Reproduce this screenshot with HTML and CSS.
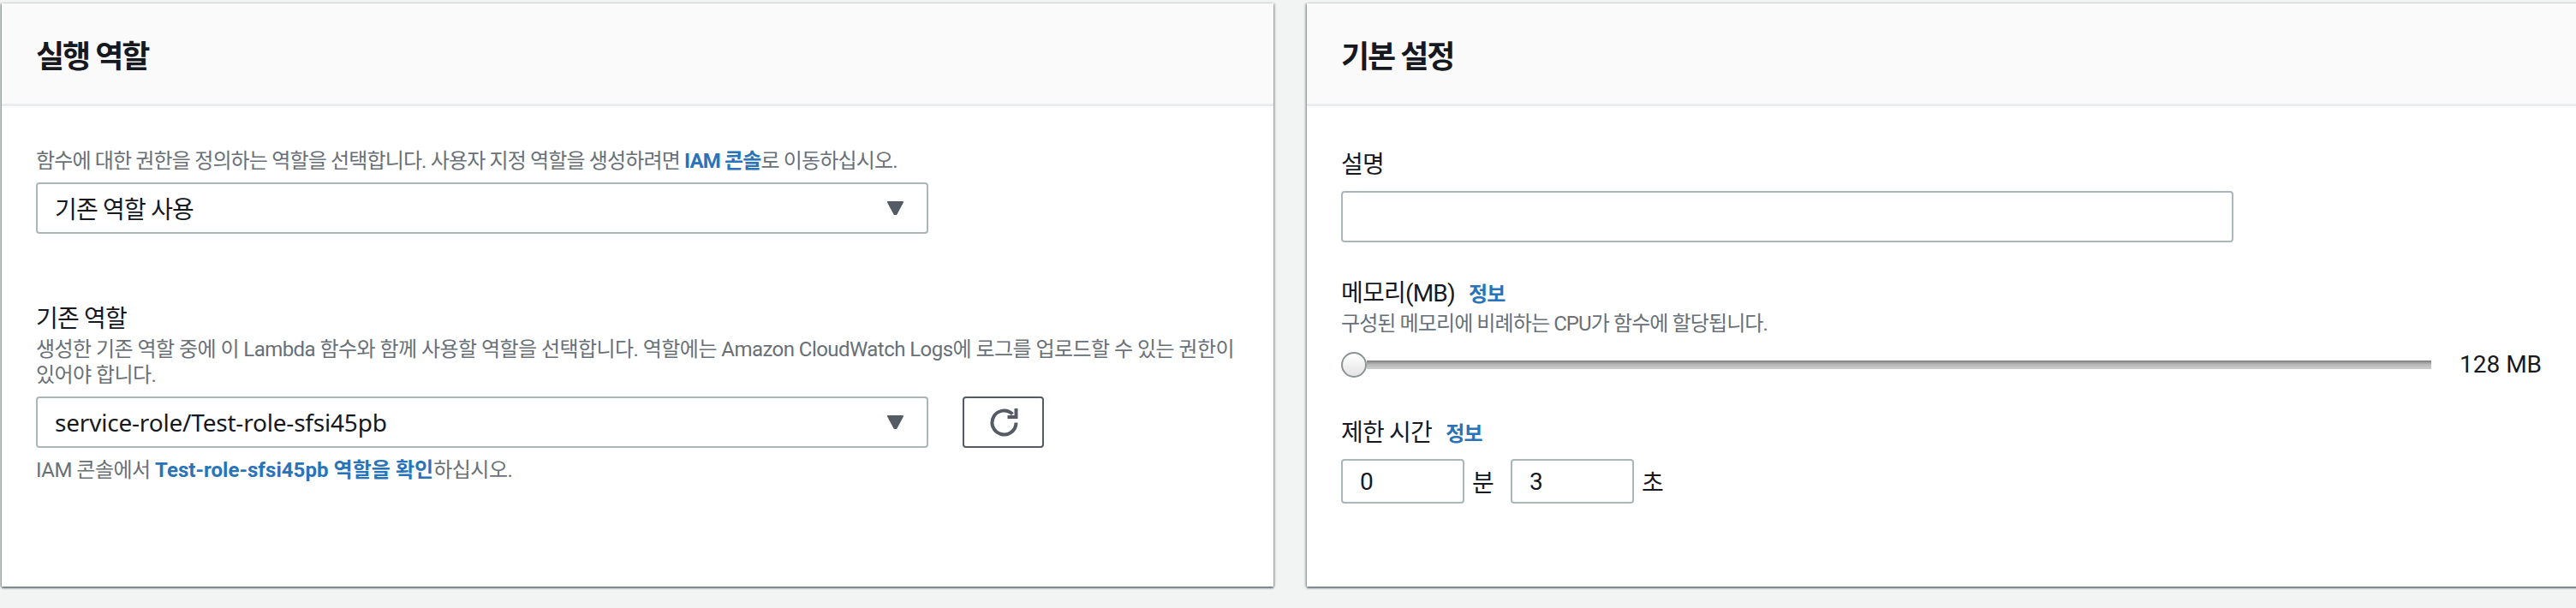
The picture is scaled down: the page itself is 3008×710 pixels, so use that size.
FILE: index.html
```html
<!DOCTYPE html>
<html lang="ko">
<head>
    <meta charset="UTF-8">
    <title>Lambda 설정</title>
    <link rel="stylesheet" href="styles.css">
</head>
<body>
    <div class="page">
        <section class="card card-role">
            <header class="card-header">
                <h2>실행 역할</h2>
            </header>
            <div class="card-body">
                <p class="help intro">함수에 대한 권한을 정의하는 역할을 선택합니다. 사용자 지정 역할을 생성하려면 <a href="#">IAM 콘솔</a>로 이동하십시오.</p>
                <div class="select">
                    <span>기존 역할 사용</span>
                    <svg class="caret" width="21" height="16" viewBox="0 0 21 16"><path d="M2 1h17l-7.500 14h-2z" fill="#545b64" stroke="#545b64" stroke-width="2" stroke-linejoin="round"/></svg>
                </div>

                <label class="label existing-label">기존 역할</label>
                <p class="help existing-help">생성한 기존 역할 중에 이 Lambda 함수와 함께 사용할 역할을 선택합니다. 역할에는 Amazon CloudWatch Logs에 로그를 업로드할 수 있는 권한이 있어야 합니다.</p>
                <div class="select-row">
                    <div class="select">
                        <span class="role-name">service-role/Test-role-sfsi45pb</span>
                        <svg class="caret" width="21" height="16" viewBox="0 0 21 16"><path d="M2 1h17l-7.500 14h-2z" fill="#545b64" stroke="#545b64" stroke-width="2" stroke-linejoin="round"/></svg>
                    </div>
                    <button class="refresh" type="button">
                        <svg width="36" height="36" viewBox="0 0 36 36"><path d="M28.400 8.600A14 14 0 1 0 32.500 18.500" fill="none" stroke="#545b64" stroke-width="4"/><path d="M34.500 2v12h-12v-4h8V2z" fill="#545b64"/></svg>
                    </button>
                </div>
                <p class="help note">IAM 콘솔에서 <a href="#">Test-role-sfsi45pb 역할을 확인</a>하십시오.</p>
            </div>
        </section>

        <section class="card card-basic">
            <header class="card-header">
                <h2>기본 설정</h2>
            </header>
            <div class="card-body">
                <label class="label desc-label" for="description">설명</label>
                <input class="text-input description" type="text" id="description">

                <div class="label memory-label">메모리(MB) <a class="info" href="#">정보</a></div>
                <p class="help memory-help">구성된 메모리에 비례하는 CPU가 함수에 할당됩니다.</p>
                <div class="slider-row">
                    <div class="slider">
                        <div class="thumb"></div>
                        <div class="track"></div>
                    </div>
                    <span class="slider-value">128 MB</span>
                </div>

                <div class="label time-label">제한 시간 <a class="info" href="#">정보</a></div>
                <div class="time-row">
                    <input class="text-input time" type="text" value="0">
                    <span>분</span>
                    <input class="text-input time" type="text" value="3">
                    <span>초</span>
                </div>
            </div>
        </section>
    </div>
</body>
</html>
```

FILE: styles.css
```css
/* Lambda config panels, drawn at 2x */
body {
    margin: 0;
    background-color: #f2f3f3;
    color: #16191f;
    font-family: Roboto, "Noto Sans CJK KR", sans-serif;
    font-size: 28px;
    letter-spacing: -0.8px;
    overflow: hidden;
}

a {
    color: #2a73b8;
    font-weight: 700;
    text-decoration: none;
}

p {
    margin: 0;
}

.page {
    display: flex;
    gap: 39px;
    height: 710px;
    padding: 4px 0 0 2px;
    box-sizing: border-box;
}

.card {
    height: 681px;
    background-color: #fff;
    box-shadow: 0 2px 2px rgba(0, 28, 36, 0.55), 2px 0 2px rgba(0, 28, 36, 0.2), -2px 0 2px rgba(0, 28, 36, 0.25);
}

.card-role {
    width: 1485px;
    flex: none;
}

.card-basic {
    flex: 1;
    margin-right: -10px;
}

.card-header {
    height: 117px;
    display: flex;
    align-items: center;
    padding: 0 40px;
    background-color: #fafafa;
    border-bottom: 3px solid #eaeded;
}

h2 {
    margin: 0;
    font-size: 36px;
    font-weight: 700;
    letter-spacing: -2px;
}

.card-body {
    padding: 0 40px;
}

.card-role .card-body {
    padding-top: 48px;
}

.help {
    color: #687078;
    font-size: 24px;
    line-height: 30px;
    letter-spacing: -0.5px;
}

.label {
    display: block;
    line-height: 36px;
}

.intro {
    line-height: 32px;
    margin-bottom: 9px;
    letter-spacing: -0.85px;
}

.select {
    width: 1042px;
    height: 60px;
    box-sizing: border-box;
    display: flex;
    align-items: center;
    justify-content: space-between;
    padding: 0 26px 0 20px;
    border: 2px solid #aab7b8;
    border-radius: 4px;
    flex: none;
}

.role-name {
    font-family: "Noto Sans", sans-serif;
    letter-spacing: -0.2px;
}

.existing-label {
    margin-top: 82px;
    margin-bottom: 2px;
}

.existing-help {
    width: 1405px;
    margin-bottom: 10px;
    letter-spacing: -0.55px;
}

.select-row {
    display: flex;
    gap: 40px;
}

.refresh {
    width: 95px;
    height: 60px;
    padding: 0;
    display: flex;
    align-items: center;
    justify-content: center;
    background-color: #fff;
    border: 2px solid #545b64;
    border-radius: 4px;
}

.note {
    margin-top: 11px;
}

.note a {
    letter-spacing: 0.05px;
}

.text-input {
    box-sizing: border-box;
    padding: 0 20px;
    border: 2px solid #aab7b8;
    border-radius: 4px;
    background-color: #fff;
    color: #16191f;
    font-family: inherit;
    font-size: 28px;
}

.desc-label {
    padding-top: 51px;
    margin-bottom: 12px;
}

.description {
    display: block;
    width: 1042px;
    height: 60px;
}

.info {
    font-size: 24px;
    line-height: 1;
    margin-left: 10px;
}

.memory-label {
    margin-top: 42px;
    margin-bottom: 2px;
}

.memory-help {
    letter-spacing: -0.9px;
}

.slider-row {
    display: flex;
    align-items: center;
    margin-top: 16px;
}

.slider {
    width: 1273px;
    display: flex;
    align-items: center;
}

.thumb {
    width: 30px;
    height: 30px;
    box-sizing: border-box;
    border: 2px solid #8d9495;
    border-radius: 50%;
    background: linear-gradient(#fff, #e4e4e4);
    flex: none;
}

.track {
    flex: 1;
    height: 10px;
    background: linear-gradient(#777 0, #999 20%, #bbb 50%, #ccc 100%);
}

.slider-value {
    margin-left: 33px;
    letter-spacing: 0;
}

.time-label {
    margin-top: 46px;
    margin-bottom: 12px;
}

.time-row {
    display: flex;
    align-items: center;
    gap: 9px;
}

.time {
    width: 144px;
    height: 52px;
}

.time-row span + .time {
    margin-left: 11px;
}
```
